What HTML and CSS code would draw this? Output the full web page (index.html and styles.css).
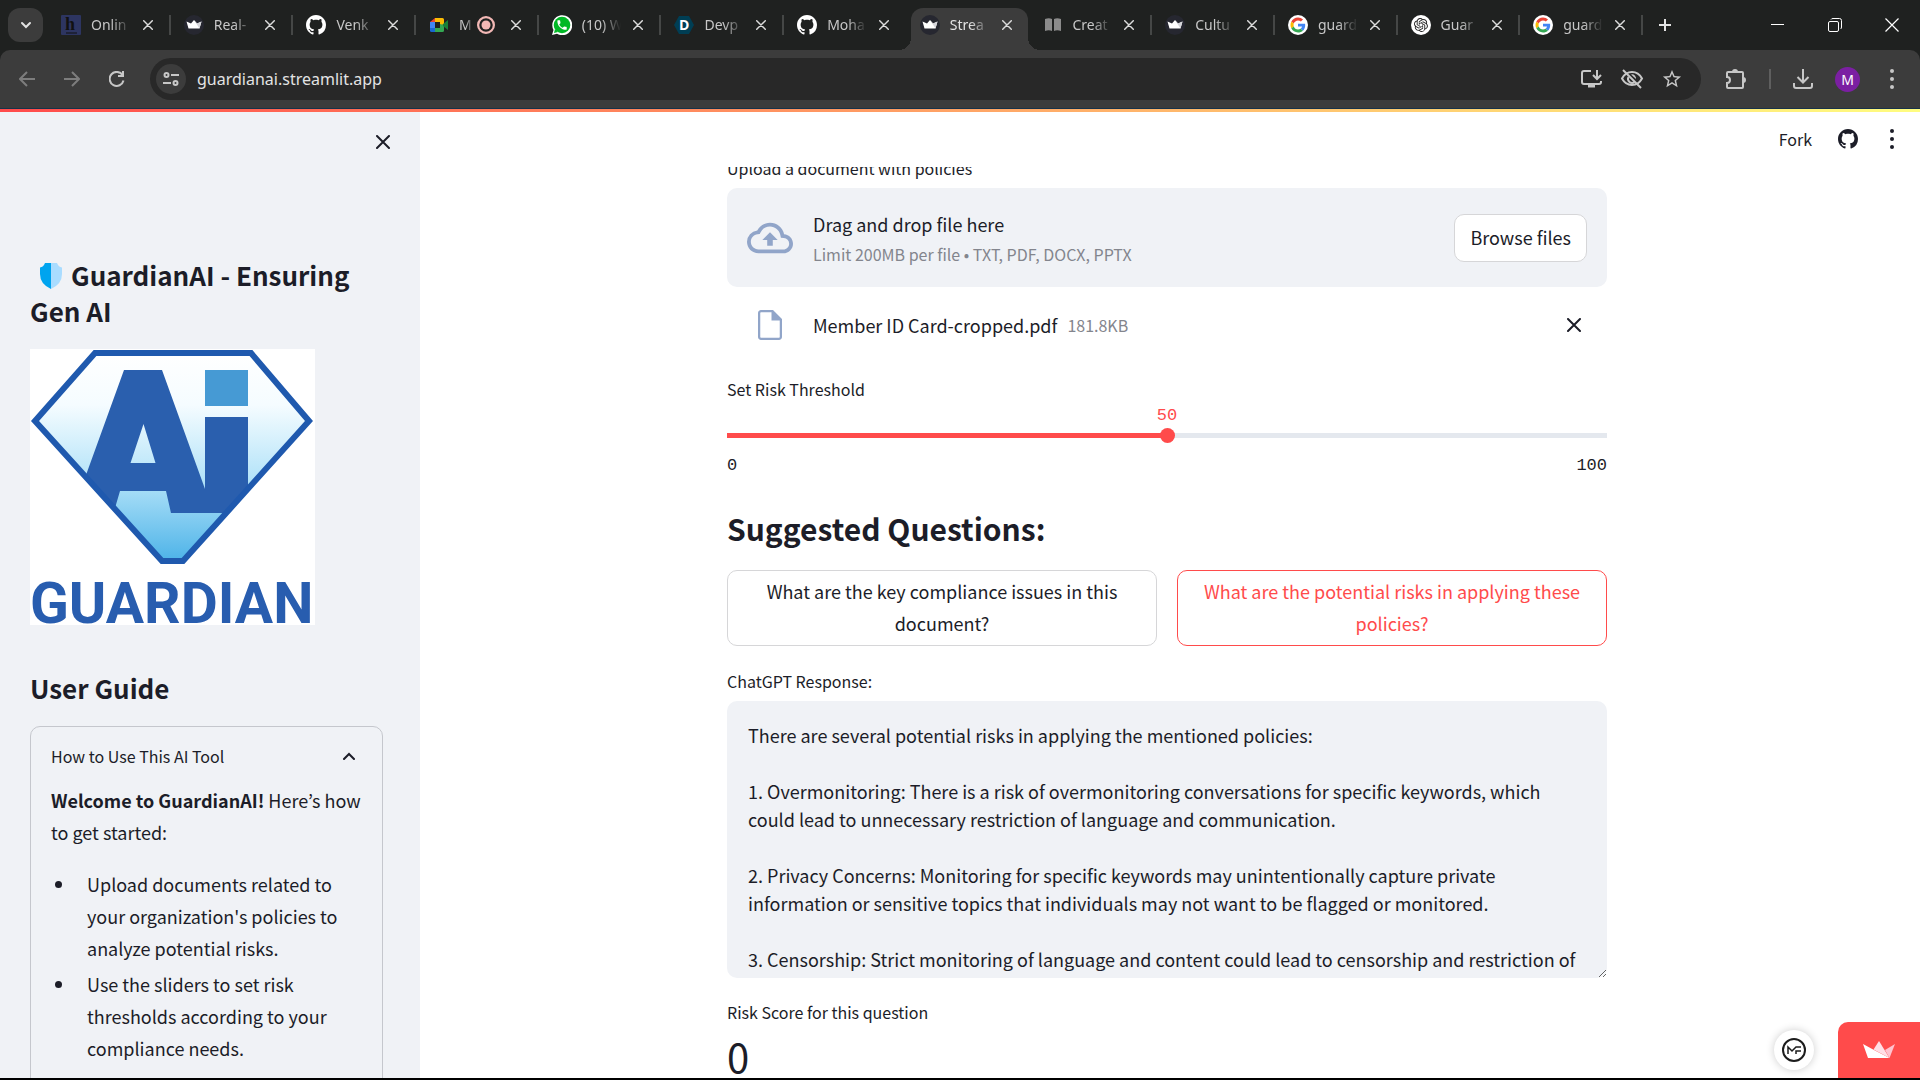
FILE: index.html
```html
<!DOCTYPE html>
<html lang="en">
<head>
<meta charset="utf-8">
<title>GuardianAI</title>
<link rel="stylesheet" href="styles.css">
</head>
<body>
<svg class="sprite" aria-hidden="true">
  <symbol id="x" viewBox="0 0 14 14"><path d="M1 1l12 12M13 1L1 13" fill="none" stroke="currentColor" stroke-width="2" stroke-linecap="round"/></symbol>
  <symbol id="github" viewBox="0 0 16 16"><path fill="currentColor" d="M8 0C3.58 0 0 3.58 0 8c0 3.54 2.29 6.53 5.47 7.59.4.07.55-.17.55-.38 0-.19-.01-.82-.01-1.49-2.01.37-2.53-.49-2.69-.94-.09-.23-.48-.94-.82-1.13-.28-.15-.68-.52-.01-.53.63-.01 1.08.58 1.23.82.72 1.21 1.87.87 2.33.66.07-.52.28-.87.51-1.07-1.78-.2-3.64-.89-3.64-3.95 0-.87.31-1.59.82-2.15-.08-.2-.36-1.02.08-2.12 0 0 .67-.21 2.2.82.64-.18 1.32-.27 2-.27s1.36.09 2 .27c1.53-1.04 2.2-.82 2.2-.82.44 1.1.16 1.92.08 2.12.51.56.82 1.27.82 2.15 0 3.07-1.87 3.75-3.65 3.95.29.25.54.73.54 1.48 0 1.07-.01 1.93-.01 2.2 0 .21.15.46.55.38A8.01 8.01 0 0 0 16 8c0-4.42-3.58-8-8-8z"/></symbol>
  <symbol id="crown" viewBox="0 0 20 20"><circle cx="10" cy="10" r="10" fill="#262730"/><path d="M2.500 6.500L7 8.500 10 5l3 3.500 4.500-2L15.500 13.500h-11z" fill="#fff"/><path d="M10 5l3 3.500 4.500-2-2 7z" fill="#d5d5da"/></symbol>
  <symbol id="google" viewBox="0 0 20 20"><circle cx="10" cy="10" r="10" fill="#fff"/><g transform="translate(2.500 2.500) scale(.3125)"><path fill="#EA4335" d="M24 9.500c3.540 0 6.710 1.220 9.210 3.600l6.850-6.850C35.900 2.380 30.470 0 24 0 14.620 0 6.510 5.380 2.560 13.220l7.980 6.190C12.430 13.720 17.740 9.500 24 9.500z"/><path fill="#4285F4" d="M46.980 24.550c0-1.570-.15-3.090-.38-4.550H24v9.020h12.940c-.58 2.960-2.260 5.480-4.780 7.180l7.730 6c4.510-4.180 7.090-10.360 7.090-17.650z"/><path fill="#FBBC05" d="M10.530 28.590c-.48-1.450-.76-2.990-.76-4.590s.27-3.140.76-4.590l-7.980-6.190C.92 16.460 0 20.120 0 24c0 3.880.92 7.540 2.560 10.780l7.970-6.190z"/><path fill="#34A853" d="M24 48c6.480 0 11.930-2.130 15.890-5.810l-7.730-6c-2.150 1.450-4.920 2.300-8.160 2.300-6.260 0-11.570-4.220-13.470-9.910l-7.980 6.190C6.510 42.620 14.620 48 24 48z"/></g></symbol>
  <symbol id="dots" viewBox="0 0 6 22"><g fill="currentColor"><circle cx="3" cy="3" r="2"/><circle cx="3" cy="11" r="2"/><circle cx="3" cy="19" r="2"/></g></symbol>
</svg>

<header class="browser">
  <div class="tabstrip">
    <button class="tab-search" aria-label="Search tabs"><svg width="12" height="8" viewBox="0 0 12 8"><path d="M2 2l4 4 4-4" fill="none" stroke="#e3e3e3" stroke-width="2" stroke-linecap="round"/></svg></button>
    <nav class="tabs">
      <div class="tab"><svg class="fav" viewBox="0 0 20 20"><rect width="20" height="20" rx="1" fill="#2d3561"/><text x="4" y="15" font-family="Liberation Serif" font-size="18" font-weight="bold" fill="#111">h</text><path d="M5 18h11" stroke="#111" stroke-width="1"/></svg><span class="tab-title">Onlin</span><button class="tab-close" aria-label="Close"><svg><use href="#x"/></svg></button></div>
      <div class="tab"><svg class="fav"><use href="#crown"/></svg><span class="tab-title">Real-</span><button class="tab-close" aria-label="Close"><svg><use href="#x"/></svg></button></div>
      <div class="tab"><svg class="fav white"><use href="#github"/></svg><span class="tab-title">Venk</span><button class="tab-close" aria-label="Close"><svg><use href="#x"/></svg></button></div>
      <div class="tab"><svg class="fav" viewBox="0 0 20 20"><path d="M1 7l5-4v4z" fill="#ea4335"/><path d="M6 3h7.500q1.500 0 1.500 1.500V9l-4 2V7H6z" fill="#fbbc04"/><path d="M1 7h5v6H1z" fill="#4285f4"/><path d="M1 13h5v4H2.500Q1 17 1 15.500z" fill="#1967d2"/><path d="M6 13h5V9l4 1v5.500q0 1.500-1.500 1.500H6z" fill="#34a853"/><path d="M14 9l5-4v10l-5-4z" fill="#188038"/></svg><span class="tab-title short">M</span><svg class="rec" viewBox="0 0 16 16"><circle cx="8" cy="8" r="7" fill="none" stroke="#f2b8b5" stroke-width="2"/><circle cx="8" cy="8" r="4" fill="#f2b8b5"/></svg><button class="tab-close" aria-label="Close"><svg><use href="#x"/></svg></button></div>
      <div class="tab"><svg class="fav" viewBox="0 0 20 20"><path d="M0 20l1.500-5A10 10 0 1 1 5 18.700z" fill="#fff"/><circle cx="10" cy="10" r="8.300" fill="#00b825"/><path d="M2 18l1-4 3 3z" fill="#00b825"/><path transform="translate(3.800 3.800) scale(.52)" fill="#fff" d="M6.620 10.790c1.440 2.830 3.760 5.140 6.590 6.590l2.200-2.200c.27-.27.67-.36 1.020-.24 1.120.37 2.330.57 3.570.57.55 0 1 .45 1 1V20c0 .55-.45 1-1 1-9.390 0-17-7.610-17-17 0-.55.45-1 1-1h3.500c.55 0 1 .45 1 1 0 1.250.2 2.450.57 3.570.11.35.03.74-.25 1.020l-2.200 2.200z"/></svg><span class="tab-title">(10) W</span><button class="tab-close" aria-label="Close"><svg><use href="#x"/></svg></button></div>
      <div class="tab"><svg class="fav" viewBox="0 0 20 20"><path d="M5 1h10l5 9-5 9H5l-5-9z" fill="#003e54"/><text x="5" y="15" font-family="Open Sans" font-size="14" font-weight="bold" fill="#fff">D</text></svg><span class="tab-title">Devp</span><button class="tab-close" aria-label="Close"><svg><use href="#x"/></svg></button></div>
      <div class="tab last"><svg class="fav white"><use href="#github"/></svg><span class="tab-title">Moha</span><button class="tab-close" aria-label="Close"><svg><use href="#x"/></svg></button></div>
      <div class="tab active"><svg class="fav"><use href="#crown"/></svg><span class="tab-title">Strea</span><button class="tab-close" aria-label="Close"><svg><use href="#x"/></svg></button></div>
      <div class="tab"><svg class="fav" viewBox="0 0 20 20"><path d="M2 4q4-1.500 7 0v12q-3-1.500-7 0zM11 4q3-1.500 7 0v12q-4-1.500-7 0z" fill="#8b8b8b"/></svg><span class="tab-title">Creat</span><button class="tab-close" aria-label="Close"><svg><use href="#x"/></svg></button></div>
      <div class="tab"><svg class="fav"><use href="#crown"/></svg><span class="tab-title">Cultu</span><button class="tab-close" aria-label="Close"><svg><use href="#x"/></svg></button></div>
      <div class="tab"><svg class="fav"><use href="#google"/></svg><span class="tab-title">guard</span><button class="tab-close" aria-label="Close"><svg><use href="#x"/></svg></button></div>
      <div class="tab"><svg class="fav" viewBox="0 0 20 20"><circle cx="10" cy="10" r="10" fill="#fff"/><path transform="translate(3 3) scale(.58)" fill="#222" d="M22.2819 9.8211a5.9847 5.9847 0 0 0-.5157-4.9108 6.0462 6.0462 0 0 0-6.5098-2.9A6.0651 6.0651 0 0 0 4.9807 4.1818a5.9847 5.9847 0 0 0-3.9977 2.9 6.0462 6.0462 0 0 0 .7427 7.0966 5.98 5.98 0 0 0 .511 4.9107 6.051 6.051 0 0 0 6.5146 2.9001A5.9847 5.9847 0 0 0 13.2599 24a6.0557 6.0557 0 0 0 5.7718-4.2058 5.9894 5.9894 0 0 0 3.9977-2.9001 6.0557 6.0557 0 0 0-.7475-7.0729zm-9.022 12.6081a4.4755 4.4755 0 0 1-2.8764-1.0408l.1419-.0804 4.7783-2.7582a.7948.7948 0 0 0 .3927-.6813v-6.7369l2.02 1.1686a.071.071 0 0 1 .038.052v5.5826a4.504 4.504 0 0 1-4.4945 4.4944zm-9.6607-4.1254a4.4708 4.4708 0 0 1-.5346-3.0137l.142.0852 4.783 2.7582a.7712.7712 0 0 0 .7806 0l5.8428-3.3685v2.3324a.0804.0804 0 0 1-.0332.0615L9.74 19.9502a4.4992 4.4992 0 0 1-6.1408-1.6464zM2.3408 7.8956a4.485 4.485 0 0 1 2.3655-1.9728V11.6a.7664.7664 0 0 0 .3879.6765l5.8144 3.3543-2.0201 1.1685a.0757.0757 0 0 1-.071 0l-4.8303-2.7865A4.504 4.504 0 0 1 2.3408 7.872zm16.5963 3.8558L13.1038 8.364 15.1192 7.2a.0757.0757 0 0 1 .071 0l4.8303 2.7913a4.4944 4.4944 0 0 1-.6765 8.1042v-5.6772a.79.79 0 0 0-.407-.667zm2.0107-3.0231l-.142-.0852-4.7735-2.7818a.7759.7759 0 0 0-.7854 0L9.409 9.2297V6.8974a.0662.0662 0 0 1 .0284-.0615l4.8303-2.7866a4.4992 4.4992 0 0 1 6.6802 4.66zM8.3065 12.863l-2.02-1.1638a.0804.0804 0 0 1-.038-.0567V6.0742a4.4992 4.4992 0 0 1 7.3757-3.4537l-.142.0805L8.704 5.459a.7948.7948 0 0 0-.3927.6813zm1.0976-2.3654l2.602-1.4998 2.6069 1.4998v2.9994l-2.5974 1.4997-2.6067-1.4997Z"/></svg><span class="tab-title">Guar</span><button class="tab-close" aria-label="Close"><svg><use href="#x"/></svg></button></div>
      <div class="tab"><svg class="fav"><use href="#google"/></svg><span class="tab-title">guard</span><button class="tab-close" aria-label="Close"><svg><use href="#x"/></svg></button></div>
    </nav>
    <button class="icon-btn new-tab" aria-label="New tab"><svg width="14" height="14" viewBox="0 0 14 14"><path d="M7 1v12M1 7h12" stroke="#e3e3e3" stroke-width="2"/></svg></button>
    <div class="window-controls">
      <button class="icon-btn" aria-label="Minimize"><svg width="14" height="14" viewBox="0 0 14 14"><path d="M0 6.500h13" stroke="#fff"/></svg></button>
      <button class="icon-btn" aria-label="Restore"><svg width="14" height="14" viewBox="0 0 14 14"><rect x=".5" y="3.500" width="10" height="10" rx="1.500" fill="none" stroke="#fff"/><path d="M3 1.500Q3.500.5 5 .5h6.500q2 0 2 2V9q0 1.500-1 2" fill="none" stroke="#fff"/></svg></button>
      <button class="icon-btn" aria-label="Close window"><svg width="14" height="14" viewBox="0 0 14 14"><path d="M.5.5l13 13M13.500.5l-13 13" stroke="#fff" stroke-width="1.200"/></svg></button>
    </div>
  </div>

  <div class="toolbar">
    <div class="nav-buttons">
      <button class="icon-btn dim" aria-label="Back"><svg width="16" height="16" viewBox="0 0 16 16"><path d="M8 1L1 8l7 7M1 8h15" fill="none" stroke="currentColor" stroke-width="2"/></svg></button>
      <button class="icon-btn dim" aria-label="Forward"><svg width="16" height="16" viewBox="0 0 16 16"><path d="M8 1l7 7-7 7M15 8H0" fill="none" stroke="currentColor" stroke-width="2"/></svg></button>
      <button class="icon-btn" aria-label="Reload"><svg width="16" height="16" viewBox="0 0 16 16"><path d="M14.500 9.500A7 7 0 1 1 13.500 4" fill="none" stroke="currentColor" stroke-width="2"/><path d="M15 0v6H9V4h4V0z" fill="currentColor"/></svg></button>
    </div>
    <div class="address">
      <button class="site-info" aria-label="Site information"><svg width="16" height="14" viewBox="0 0 16 14" fill="none" stroke="currentColor" stroke-width="2"><circle cx="3.500" cy="3" r="2"/><path d="M8 3h8M0 11h8"/><circle cx="12.500" cy="11" r="2"/></svg></button>
      <input class="url" aria-label="Address" value="guardianai.streamlit.app">
      <button class="icon-btn" aria-label="Install"><svg width="21" height="18" viewBox="0 0 21 18" fill="none" stroke="currentColor" stroke-width="2"><path d="M10 1H3Q1 1 1 3v9q0 2 2 2h15q2 0 2-2v-1M16 0v8M12 5l4 4 4-4"/><path d="M7 16h7" stroke-width="3"/></svg></button>
      <button class="icon-btn" aria-label="Third-party cookies blocked"><svg width="24" height="20" viewBox="0 0 24 20" fill="none" stroke="currentColor" stroke-width="2"><path d="M2 9.500Q5.500 3 12 3t10 6.500Q18.500 16 12 16T2 9.500z"/><path d="M8.500 8a4 4 0 0 0 6 5" /><path d="M11 5.500A4 4 0 0 1 16 10z" fill="currentColor" stroke="none"/><path d="M3 1l18 18"/></svg></button>
      <button class="icon-btn" aria-label="Bookmark"><svg width="20" height="20" viewBox="1 1 22 22"><path fill="currentColor" d="M22 9.240l-7.190-.62L12 2 9.190 8.630 2 9.240l5.460 4.730L5.820 21 12 17.270 18.180 21l-1.630-7.030L22 9.240zM12 15.400l-3.760 2.270 1-4.280-3.320-2.880 4.380-.38L12 6.100l1.710 4.040 4.380.38-3.320 2.880 1 4.280L12 15.400z"/></svg></button>
    </div>
    <div class="actions">
      <button class="icon-btn" aria-label="Extensions"><svg width="22" height="22" viewBox="0 0 22 22" fill="none" stroke="currentColor" stroke-width="2"><path d="M3 4h14q1 0 1 1v14q0 1-1 1H3q-1 0-1-1v-4q3 0 3-3t-3-3V5q0-1 1-1z"/><path d="M8 4a2 2 0 0 1 4 0zM18 10a2 2 0 0 1 0 4z" fill="currentColor"/></svg></button>
      <span class="divider"></span>
      <button class="icon-btn" aria-label="Downloads"><svg width="20" height="20" viewBox="0 0 20 20" fill="none" stroke="currentColor" stroke-width="2"><path d="M10 0v13M4.500 8l5.500 5.500L15.500 8"/><path d="M1 14v3q0 2 2 2h14q2 0 2-2v-3"/></svg></button>
      <button class="avatar">M</button>
      <button class="icon-btn" aria-label="Menu"><svg width="6" height="22"><use href="#dots"/></svg></button>
    </div>
  </div>
</header>

<div class="decoration"></div>

<div class="app">
  <aside class="sidebar">
    <button class="sidebar-close" aria-label="Close sidebar"><svg width="14" height="14"><use href="#x"/></svg></button>
    <h2 class="brand"><svg class="shield" viewBox="0 0 24 28"><path d="M12 1H6Q4.500 5 1 5.500V12q0 10 11 15z" fill="#00a4ef"/><path d="M12 1h6q1.500 4 5 4.500V12q0 10-11 15z" fill="#a9dcff"/></svg>GuardianAI - Ensuring Gen AI</h2>
    <svg class="logo" viewBox="0 0 285 276" role="img" aria-label="Ai Guardian">
      <defs><linearGradient id="sky" x1="0" y1="0" x2="0" y2="1"><stop offset="0" stop-color="#fff"/><stop offset=".25" stop-color="#f5fcff"/><stop offset=".6" stop-color="#b5e4f9"/><stop offset="1" stop-color="#4db3e8"/></linearGradient></defs>
      <rect width="285" height="276" fill="#fff"/>
      <path d="M65 4h156l58 68-126 140h-21L5 72z" fill="url(#sky)"/>
      <path fill="#2a5fae" fill-rule="evenodd" d="M94 21h38l43 119V68h43v69l-24 27h-53l-5-22H90l-5 17-29-33zM113.500 75l-13 39h25z"/>
      <rect x="175" y="21" width="43" height="36" fill="#469ad4"/>
      <path d="M65 4h156l58 68-126 140h-21L5 72z" fill="none" stroke="#1f59ae" stroke-width="6"/>
      <text x="0" y="274" font-family="Roboto" font-weight="bold" font-size="57" fill="#285daf">GUARDIAN</text>
    </svg>
    <h2 class="guide-title">User Guide</h2>
    <details class="expander" open>
      <summary>How to Use This AI Tool<svg width="14" height="8" viewBox="0 0 14 8"><path d="M2 7l5-5 5 5" fill="none" stroke="currentColor" stroke-width="2" stroke-linecap="round"/></svg></summary>
      <p><strong>Welcome to GuardianAI!</strong> Here’s how to get started:</p>
      <ul>
        <li>Upload documents related to your organization's policies to analyze potential risks.</li>
        <li>Use the sliders to set risk thresholds according to your compliance needs.</li>
      </ul>
    </details>
  </aside>

  <main class="main">
    <div class="app-header">
      <button class="fork">Fork</button>
      <a class="repo" href="#" aria-label="View on GitHub"><svg width="20" height="20"><use href="#github"/></svg></a>
      <button class="icon-btn" aria-label="App menu"><svg width="6" height="22"><use href="#dots"/></svg></button>
    </div>
    <div class="scroll">
      <div class="block">
        <label class="label" for="browse">Upload a document with policies</label>
        <section class="dropzone">
          <svg class="cloud" viewBox="0 0 24 24"><path fill="currentColor" d="M19.350 10.040A7.490 7.490 0 0 0 12 4C9.110 4 6.600 5.640 5.350 8.040A5.994 5.994 0 0 0 0 14c0 3.310 2.690 6 6 6h13c2.760 0 5-2.240 5-5 0-2.640-2.050-4.780-4.650-4.960zM19 18H6c-2.210 0-4-1.790-4-4 0-2.050 1.530-3.760 3.560-3.970l1.070-.11.5-.95A5.469 5.469 0 0 1 12 6c2.620 0 4.880 1.860 5.390 4.430l.3 1.500 1.530.11A2.980 2.980 0 0 1 22 15c0 1.650-1.350 3-3 3zM8 13h2.550v3h2.900v-3H16l-4-4z"/></svg>
          <div class="drop-text"><span>Drag and drop file here</span><small>Limit 200MB per file • TXT, PDF, DOCX, PPTX</small></div>
          <button class="btn" id="browse">Browse files</button>
        </section>
        <div class="file">
          <svg class="doc" viewBox="0 0 24 24"><path fill="currentColor" d="M14 2H6c-1.100 0-2 .9-2 2v16c0 1.100.9 2 2 2h12c1.100 0 2-.9 2-2V8zM6 20.500q-.5 0-.5-.5V4q0-.5.5-.5h7V9h5.500v11q0 .5-.5.5z"/></svg>
          <span class="file-name">Member ID Card-cropped.pdf</span><small>181.8KB</small>
          <button class="file-remove" aria-label="Remove file"><svg width="14" height="14"><use href="#x"/></svg></button>
        </div>
        <label class="label" for="risk">Set Risk Threshold</label>
        <output class="slider-value" for="risk">50</output>
        <input class="slider" id="risk" type="range" min="0" max="100" value="50">
        <div class="ticks"><span>0</span><span>100</span></div>
        <h3>Suggested Questions:</h3>
        <div class="questions">
          <button class="btn">What are the key compliance issues in this document?</button>
          <button class="btn selected">What are the potential risks in applying these policies?</button>
        </div>
        <label class="label" for="response">ChatGPT Response:</label>
        <textarea class="response" id="response">There are several potential risks in applying the mentioned policies:

1. Overmonitoring: There is a risk of overmonitoring conversations for specific keywords, which could lead to unnecessary restriction of language and communication.

2. Privacy Concerns: Monitoring for specific keywords may unintentionally capture private information or sensitive topics that individuals may not want to be flagged or monitored.

3. Censorship: Strict monitoring of language and content could lead to censorship and restriction of</textarea>
        <div class="label">Risk Score for this question</div>
        <div class="metric">0</div>
      </div>
    </div>
    <div class="badges">
      <a class="author" href="#" aria-label="Author profile"><svg width="24" height="24" viewBox="0 0 24 24" fill="none" stroke="#1c1c1c" stroke-width="2"><circle cx="12" cy="12" r="11"/><path d="M6 16V9l4 4 4-4h5M14 16v-3h5" stroke-width="1.500"/></svg></a>
      <a class="host" href="#" aria-label="Hosted with Streamlit"><svg width="32" height="18" viewBox="0 0 32 18"><path d="M0 3l11 6 15.500 8H5z" fill="#fff"/><path d="M16 0l-5.500 8.500 16 8.500z" fill="#ffdfe6"/><path d="M32 3l-10 6 4.500 8z" fill="#ffc3cf"/></svg></a>
    </div>
  </main>
</div>
</body>
</html>
```
FILE: styles.css
```css
* { box-sizing: border-box; }

body {
  margin: 0;
  height: 100vh;
  display: flex;
  flex-direction: column;
  overflow: hidden;
  border-bottom: 2px solid #000;
  background: #fff;
  color: #1c1d28;
  font: 18px/32px "Noto Sans CJK KR", "Noto Sans", sans-serif;
}

button, input, textarea { font: inherit; color: inherit; }
button { padding: 0; border: 0; background: none; }
svg { display: block; flex: none; }
h2, h3, p, ul { margin: 0; }
.sprite { position: absolute; width: 0; height: 0; }

/* Browser frame */
.browser {
  background: #1f2120;
  color: #c7c7c7;
  font: 14px/20px "Noto Sans", sans-serif;
}
.tabstrip { display: flex; align-items: center; height: 50px; padding-left: 8px; }
.tab-search {
  display: flex;
  flex: none;
  align-items: center;
  justify-content: center;
  width: 35px;
  height: 34px;
  border-radius: 12px;
  background: #3c3c3c;
}
.tabs { display: flex; flex: 1; align-self: stretch; min-width: 0; padding: 8px 0 0 5px; }
.tab {
  position: relative;
  display: flex;
  flex: 1 1 0;
  align-items: center;
  min-width: 0;
  padding: 0 18px 8px 13px;
}
.tab::after {
  content: "";
  position: absolute;
  right: 0;
  top: 7px;
  width: 2px;
  height: 20px;
  background: #454746;
}
.tab.last::after { display: none; }
.tab.active { color: #e3e3e3; }
.tab.active::before {
  content: "";
  position: absolute;
  inset: 0 2px 0 4px;
  border-radius: 12px 12px 0 0;
  background: #3c3c3c;
}
/* Curved feet that join the active tab to the toolbar */
.tab.active::after {
  inset: auto -10px 0 -8px;
  width: auto;
  height: 12px;
  background:
    radial-gradient(circle at 0 0, transparent 12px, #3c3c3c 12px) left / 12px 12px no-repeat,
    radial-gradient(circle at 100% 0, transparent 12px, #3c3c3c 12px) right / 12px 12px no-repeat;
}
.tab.active > * { position: relative; }
.fav { width: 20px; height: 20px; }
.white { color: #fff; }
.tab-title {
  flex: 1;
  min-width: 0;
  margin: 0 12px 0 10px;
  overflow: hidden;
  white-space: nowrap;
  mask-image: linear-gradient(to right, #000 50%, transparent);
}
.tab-title.short { flex: 0 0 14px; margin-right: 4px; }
.rec { width: 18px; height: 18px; margin-right: auto; }
.tab-close svg { width: 10px; height: 10px; }
.tab-close { color: #dcdcdc; }
.icon-btn { display: flex; align-items: center; justify-content: center; }
.new-tab { flex: none; width: 44px; }
.window-controls { display: grid; flex: none; grid-template-columns: repeat(3, 57px); margin-left: 62px; }
.toolbar {
  display: flex;
  align-items: center;
  height: 58px;
  padding: 0 25px 0 19px;
  border-radius: 10px 10px 0 0;
  background: #3c3c3c;
}
.nav-buttons { display: flex; gap: 29px; }
.dim { color: #7d7d7d; }
.address {
  display: flex;
  flex: 1;
  align-items: center;
  gap: 18px;
  height: 42px;
  margin: 0 24px 0 25px;
  padding: 0 19px 0 6px;
  border-radius: 21px;
  background: #282828;
}
.site-info {
  display: flex;
  align-items: center;
  justify-content: center;
  width: 30px;
  height: 30px;
  border-radius: 50%;
  background: #3c3c3c;
}
.url {
  flex: 1;
  padding: 0;
  border: 0;
  margin-left: -7px;
  background: none;
  color: #e3e3e3;
  font-size: 16px;
  line-height: 24px;
}
.actions { display: flex; align-items: center; gap: 22px; }
.divider { width: 2px; height: 20px; background: #5f5f5f; }
.avatar {
  width: 25px;
  height: 25px;
  border-radius: 50%;
  background: #7b1fa2;
  color: #fff;
  line-height: 25px;
}
.actions .avatar { margin-right: 7px; }

.decoration {
  height: 4px;
  border-top: 1px solid #17324a;
  background: linear-gradient(to right, #ff4b4b, #fffd80);
}

/* App shell */
.app { display: flex; flex: 1; min-height: 0; }

.sidebar {
  display: flex;
  flex-direction: column;
  width: 420px;
  flex: none;
  padding: 20px 37px 0 30px;
  overflow: hidden;
  background: #f0f2f6;
}
.sidebar > * { flex: none; }
.sidebar-close {
  display: flex;
  align-items: center;
  justify-content: center;
  align-self: flex-end;
  width: 14px;
  height: 20px;
  margin-right: -7px;
}
.brand, .guide-title { font-size: 26px; font-weight: 600; line-height: 36px; }
.brand { margin-top: 105px; }
.shield { display: inline-block; width: 24px; height: 28px; margin: 0 8px 0 9px; vertical-align: -4px; }
.logo { width: 285px; height: 276px; margin-top: 20px; }
.guide-title { margin-top: 45px; }
.expander {
  margin-top: 20px;
  padding: 17px 20px 40px;
  border: 1px solid #c5c7cd;
  border-radius: 10px;
}
.expander summary {
  display: flex;
  align-items: center;
  justify-content: space-between;
  padding-right: 6px;
  font-size: 16px;
  line-height: 24px;
}
.expander p { margin-top: 16px; }
.expander ul { margin-top: 20px; padding: 0; list-style: none; }
.expander li { display: grid; grid-template-columns: 36px 1fr; }
.expander li::before {
  content: "";
  width: 7px;
  height: 7px;
  margin: 13px 0 0 4px;
  border-radius: 50%;
  background: currentColor;
}
.expander li + li { margin-top: 4px; }

.main { position: relative; display: flex; flex: 1; flex-direction: column; min-width: 0; }
.app-header {
  display: flex;
  align-items: center;
  justify-content: flex-end;
  height: 55px;
  padding: 0 25px 2px 0;
  flex: none;
  font-size: 16px;
}
.fork { margin-right: 26px; }
.repo { margin-right: 31px; color: inherit; }

.scroll { flex: 1; min-height: 0; padding-right: 6px; overflow: hidden; }
.block { display: flex; flex-direction: column; max-width: 880px; margin: -11px auto 0; }
.label { margin-bottom: 8px; font-size: 16px; line-height: 24px; }
small { color: #83858d; font-size: 16px; line-height: 24px; }

.dropzone {
  display: flex;
  align-items: center;
  gap: 20px;
  min-height: 99px;
  padding: 0 20px;
  border-radius: 10px;
  background: #f0f2f6;
}
.cloud { width: 46px; height: 46px; color: #91a5c9; }
.drop-text { display: flex; flex: 1; flex-direction: column; gap: 4px; }
.drop-text span { line-height: 28px; }
.btn {
  padding: 4px 15px 6px;
  border: 1px solid #d6d6d8;
  border-radius: 10px;
  background: #fff;
}
.selected { border-color: #ff4b4b; color: #ff4b4b; }
.dropzone .btn { height: 48px; }

.file { display: flex; align-items: center; height: 36px; margin: 20px 20px 34px; }
.doc { width: 36px; height: 36px; margin: 0 25px 0 5px; color: #91a5c9; }
.file-name { margin-right: 10px; }
.file-remove { display: flex; justify-content: center; width: 26px; margin-left: auto; }

.slider-value, .ticks { font: 17px/24px "Liberation Mono", monospace; }
.slider-value { margin-top: -5px; color: #ff4b4b; text-align: center; }
.slider {
  appearance: none;
  height: 16px;
  margin: -1px 0 11px;
  background: linear-gradient(to right, #ff4b4b 50%, #e4e8ee 50%) center / 100% 5px no-repeat;
}
.slider::-webkit-slider-thumb {
  appearance: none;
  width: 15px;
  height: 15px;
  border-radius: 50%;
  background: #ff4b4b;
}
.ticks { display: flex; justify-content: space-between; }

h3 { margin: 29px 0 21px; font-size: 30px; font-weight: 600; line-height: 42px; }
.questions { display: grid; grid-template-columns: 1fr 1fr; gap: 20px; margin-bottom: 23px; }
.response {
  height: 277px;
  margin-bottom: 22px;
  padding: 20px 21px;
  border: 0;
  border-radius: 10px;
  overflow: hidden;
  background: #f0f2f6;
  line-height: 28px;
  resize: vertical;
}
.metric { font-size: 40px; line-height: 48px; }

.badges { position: absolute; right: 0; bottom: 0; display: flex; align-items: flex-start; gap: 24px; }
.author {
  display: flex;
  align-items: center;
  justify-content: center;
  width: 40px;
  height: 40px;
  margin-top: 8px;
  border-radius: 50%;
  background: #fff;
  box-shadow: 0 0 8px #0003;
}
.host {
  display: flex;
  align-items: center;
  justify-content: center;
  width: 82px;
  height: 56px;
  border-radius: 10px 0 0;
  background: #ff4b4b;
}
```
